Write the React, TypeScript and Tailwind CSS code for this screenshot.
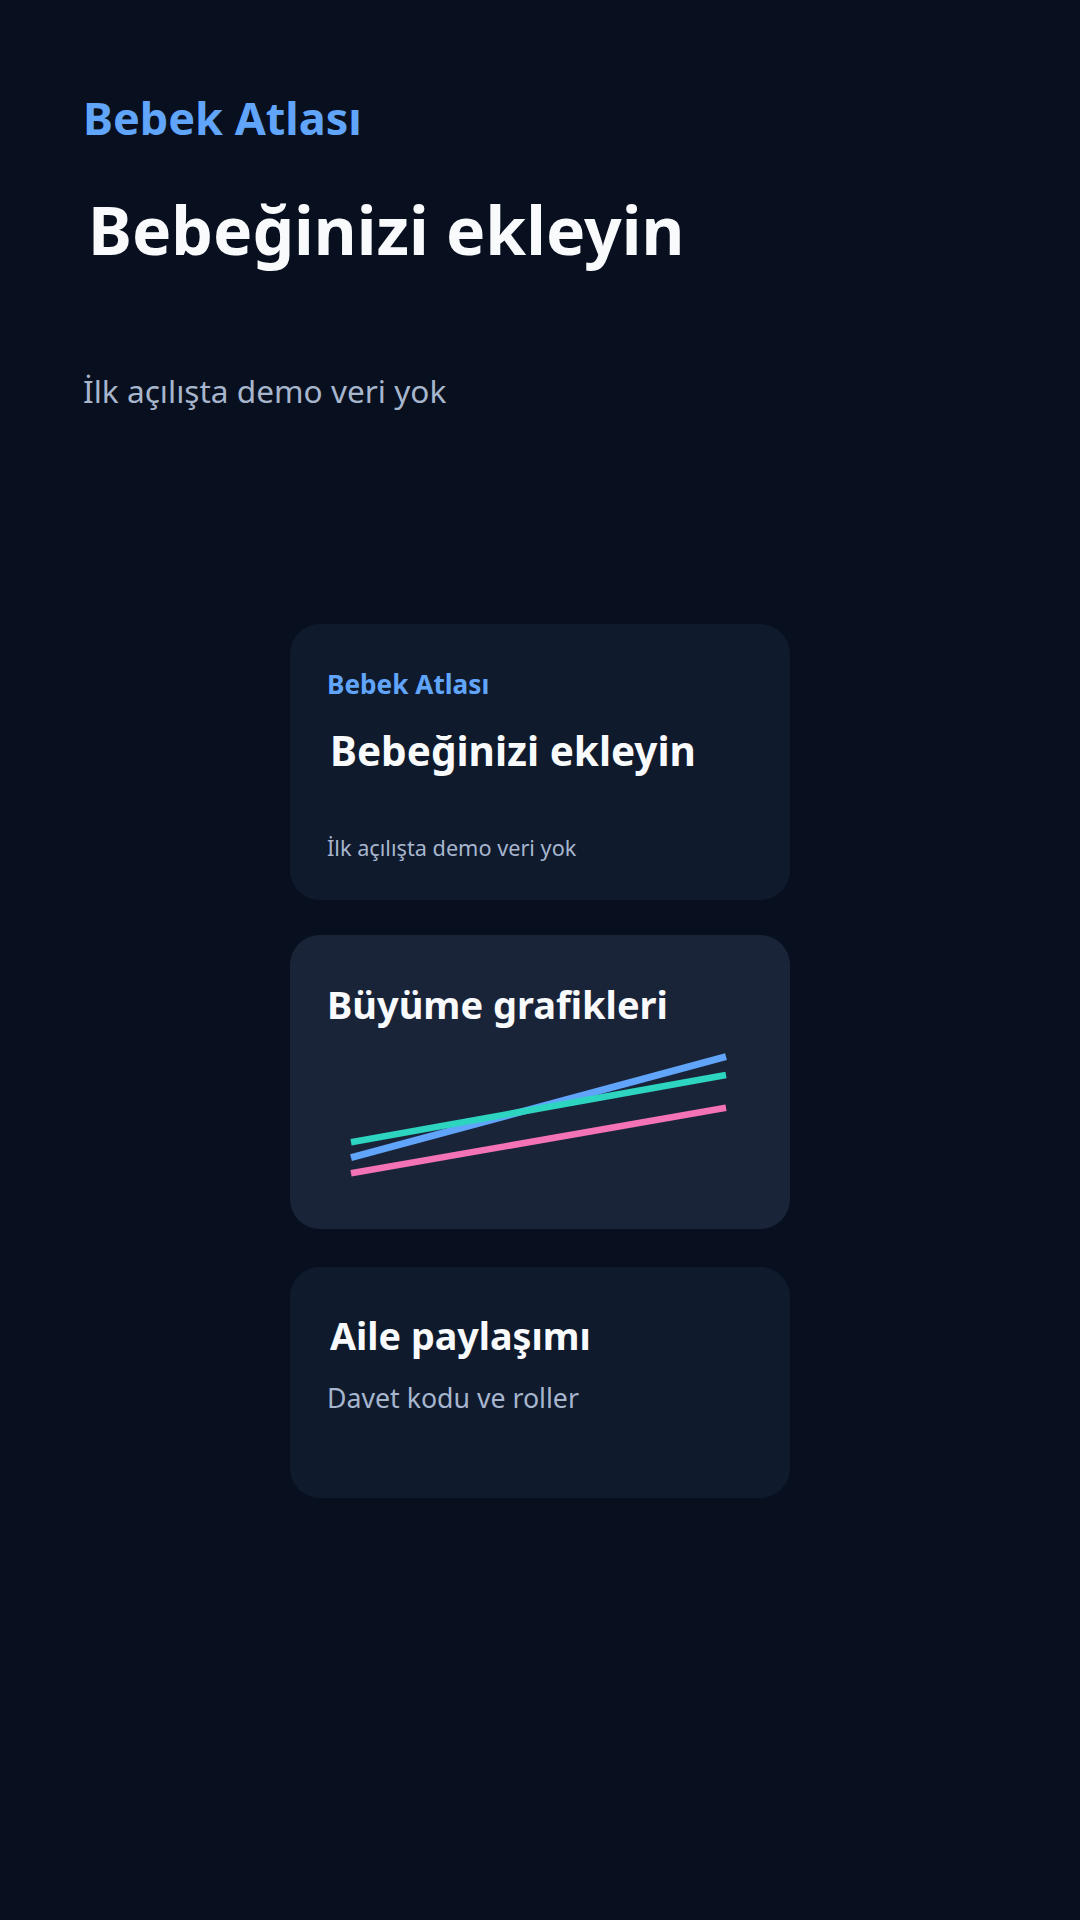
const font = "font-['Noto_Sans',sans-serif]";

function GrowthChart() {
  return (
    <svg viewBox="0 0 426 160" className="block h-[160px] w-[426px]">
      <line x1="24" y1="126.7" x2="399" y2="25.7" stroke="#60a5fa" strokeWidth="7" />
      <line x1="24" y1="111.3" x2="399" y2="44" stroke="#2dd4bf" strokeWidth="6.5" />
      <line x1="24" y1="142.3" x2="399" y2="76.7" stroke="#f472b6" strokeWidth="6.5" />
    </svg>
  );
}

export default function App() {
  return (
    <main className={`min-h-screen bg-[#08101f] ${font}`}>
      <div className="flex flex-col px-[83px] pt-[92px]">
        <p className="text-[45px] font-bold leading-[52px] text-[#60a5fa]">
          Bebek Atlası
        </p>
        <h1 className="ml-[5px] mt-[47px] text-[66px] font-bold leading-[76px] text-[#f8fafc]">
          Bebeğinizi ekleyin
        </h1>
        <p className="mt-[104px] text-[31.6px] leading-[40px] text-[#a7b6cd]">
          İlk açılışta demo veri yok
        </p>
      </div>

      <div className="mx-auto mt-[213px] flex w-[500px] flex-col pb-[120px]">
        <section className="rounded-[30px] bg-[#0f1a2d] px-[37px] pb-[38px] pt-[44px]">
          <p className="text-[26.2px] font-bold leading-[32px] text-[#60a5fa]">
            Bebek Atlası
          </p>
          <h2 className="ml-[3px] mt-[27px] text-[40.5px] font-bold leading-[48px] text-[#f8fafc]">
            Bebeğinizi ekleyin
          </h2>
          <p className="mt-[59px] text-[21.7px] leading-[28px] text-[#a7b6cd]">
            İlk açılışta demo veri yok
          </p>
        </section>

        <section className="mt-[35px] rounded-[30px] bg-[#1a2439] px-[37px] pb-[38px] pt-[46px]">
          <h2 className="text-[38px] font-bold leading-[46px] text-[#f8fafc]">
            Büyüme grafikleri
          </h2>
          <div className="mt-[4px]">
            <GrowthChart />
          </div>
        </section>

        <section className="mt-[38px] rounded-[30px] bg-[#0f1a2d] px-[37px] pb-[83px] pt-[46px]">
          <h2 className="ml-[3px] text-[37.7px] font-bold leading-[46px] text-[#f8fafc]">
            Aile paylaşımı
          </h2>
          <p className="mt-[22px] text-[26.7px] leading-[34px] text-[#a7b6cd]">
            Davet kodu ve roller
          </p>
        </section>
      </div>
    </main>
  );
}
